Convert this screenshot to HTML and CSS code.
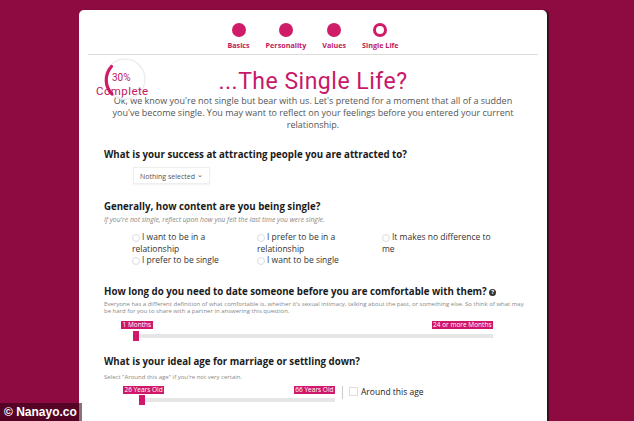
FILE: index.html
```html
<!DOCTYPE html>
<html>
<head>
<meta charset="utf-8">
<link rel="stylesheet" href="styles.css">
</head>
<body>
<div class="card">
  <nav class="steps">
    <div class="step"><span class="dot"></span><span class="step-label">Basics</span></div>
    <div class="step"><span class="dot"></span><span class="step-label">Personality</span></div>
    <div class="step"><span class="dot"></span><span class="step-label">Values</span></div>
    <div class="step"><span class="dot current"></span><span class="step-label">Single Life</span></div>
  </nav>
  <div class="divider"></div>
  <header class="header">
    <div class="progress">
      <svg class="ring" width="46" height="44" viewBox="0 0 46 44">
        <circle cx="25" cy="22" r="20" fill="none" stroke="#eeeeee" stroke-width="1.5"/>
        <path d="M 11.5 9.5 A 20 20 0 0 0 12 37" fill="none" stroke="#d01c68" stroke-width="3.2" stroke-linecap="round"/>
      </svg>
      <span class="pct">30%</span>
      <span class="complete">Complete</span>
    </div>
    <h1 class="title">...The Single Life?</h1>
    <p class="intro">Ok, we know you're not single but bear with us. Let's pretend for a moment that all of a sudden you've become single. You may want to reflect on your feelings before you entered your current relationship.</p>
  </header>

  <section class="question q1">
    <h2 class="q-title">What is your success at attracting people you are attracted to?</h2>
    <div class="select">Nothing selected <span class="caret">&#8964;</span></div>
  </section>

  <section class="question q2">
    <h2 class="q-title">Generally, how content are you being single?</h2>
    <p class="hint wide"><em>If you're not single, reflect upon how you felt the last time you were single.</em></p>
    <div class="options">
      <label class="option"><span class="radio"></span>I want to be in a relationship</label>
      <label class="option"><span class="radio"></span>I prefer to be in a relationship</label>
      <label class="option"><span class="radio"></span>It makes no difference to me</label>
      <label class="option"><span class="radio"></span>I prefer to be single</label>
      <label class="option"><span class="radio"></span>I want to be single</label>
    </div>
  </section>

  <section class="question q3">
    <h2 class="q-title">How long do you need to date someone before you are comfortable with them? <span class="help">?</span></h2>
    <p class="hint">Everyone has a different definition of what comfortable is, whether it's sexual intimacy, talking about the past, or something else. So think of what may be hard for you to share with a partner in answering this question.</p>
    <div class="slider long">
      <div class="slider-labels"><span class="tag">1 Months</span><span class="tag">24 or more Months</span></div>
      <div class="track"><span class="handle"></span></div>
    </div>
  </section>

  <section class="question q4">
    <h2 class="q-title">What is your ideal age for marriage or settling down?</h2>
    <p class="hint lower">Select "Around this age" if you're not very certain.</p>
    <div class="age-row">
      <div class="slider short">
        <div class="slider-labels"><span class="tag">26 Years Old</span><span class="tag">66 Years Old</span></div>
        <div class="track"><span class="handle"></span></div>
      </div>
      <span class="sep"></span>
      <label class="check"><span class="box"></span>Around this age</label>
    </div>
  </section>
</div>
<div class="watermark">© Nanayo.co</div>
</body>
</html>
```

FILE: styles.css
```css
html, body {
  margin: 0;
  padding: 0;
}
body {
  background: #8d0b41;
  width: 634px;
  height: 421px;
  overflow: hidden;
  position: relative;
  font-family: "Open Sans", "Liberation Sans", sans-serif;
}
.card {
  margin: 10px 0 0 79px;
  width: 468px;
  height: 420px;
  background: #ffffff;
  border-radius: 5px 5px 0 0;
  box-shadow: 2px 0 1px rgba(20, 20, 20, 0.75);
}
.steps {
  display: flex;
  justify-content: center;
  gap: 16px;
  padding: 13px 0 0 0;
}
.step {
  display: flex;
  flex-direction: column;
  align-items: center;
}
.dot {
  width: 14px;
  height: 14px;
  border-radius: 50%;
  background: #d01c68;
  box-sizing: border-box;
}
.dot.current {
  background: #fff;
  border: 3.5px solid #d01c68;
}
.step-label {
  margin-top: 3px;
  font-size: 7.2px;
  line-height: 10px;
  font-weight: 700;
  color: #c0185e;
}
.divider {
  margin: 4px 9px 0 9px;
  border-top: 1px solid #dcdcdc;
}
.header {
  position: relative;
  text-align: center;
}
.progress {
  position: absolute;
  left: 17px;
  top: 2px;
  width: 54px;
  height: 50px;
}
.ring {
  position: absolute;
  left: 4px;
  top: 0;
}
.pct {
  position: absolute;
  left: 16px;
  top: 15px;
  font-family: Roboto, sans-serif;
  font-size: 10px;
  color: #c0185e;
}
.complete {
  position: absolute;
  left: 0;
  top: 29px;
  font-family: Roboto, sans-serif;
  font-size: 11.5px;
  line-height: 11px;
  letter-spacing: 0.4px;
  color: #c0185e;
}
.title {
  margin: 0;
  padding-top: 13px;
  font-family: Roboto, sans-serif;
  font-weight: 400;
  font-size: 23px;
  line-height: 27px;
  letter-spacing: 0.5px;
  color: #c8186a;
}
.intro {
  margin: 0;
  padding: 0 24px;
  font-size: 9px;
  line-height: 12px;
  color: #555;
}
.question {
  padding: 0 16px 0 25px;
}
.q-title {
  margin: 0;
  font-size: 9.7px;
  line-height: 14px;
  font-weight: 700;
  color: #1b1b1b;
}
.q1 { margin-top: 17px; }
.q2 { margin-top: 16px; }
.q3 { margin-top: 19px; }
.q4 { margin-top: 17px; }
.help {
  display: inline-block;
  width: 7px;
  height: 7px;
  border-radius: 50%;
  background: #333;
  color: #fff;
  font-size: 6px;
  line-height: 7px;
  text-align: center;
  vertical-align: 1px;
}
.select {
  display: inline-block;
  margin: 3px 0 0 29px;
  padding: 0 6px;
  height: 17px;
  line-height: 17px;
  font-size: 7px;
  color: #555;
  border: 1px solid #eee;
  box-shadow: 0 1px 2px rgba(0,0,0,0.06);
  box-sizing: border-box;
}
.caret {
  font-size: 7px;
  position: relative;
  top: -2px;
}
.hint {
  margin: 2px 0 0 0;
  font-size: 6px;
  line-height: 7px;
  color: #888;
}
.hint.wide {
  font-size: 6.8px;
  line-height: 8px;
  margin-top: 2px;
}
.hint.lower {
  margin-top: 5px;
}
.options {
  display: grid;
  grid-template-columns: 125px 125px 125px;
  margin: 7px 0 0 28px;
}
.option {
  width: 116px;
  font-size: 8.5px;
  line-height: 11.5px;
  color: #333;
}
.radio {
  display: inline-block;
  width: 8px;
  height: 8px;
  border: 1px solid #ddd;
  border-radius: 50%;
  margin-right: 2px;
  vertical-align: -2px;
  box-sizing: border-box;
}
.slider {
  display: flex;
  flex-direction: column;
}
.slider.long {
  margin: 6px 0 0 17px;
  width: 372px;
}
.slider-labels {
  display: flex;
  justify-content: space-between;
}
.tag {
  background: #d0176a;
  color: #fff;
  font-size: 6.5px;
  line-height: 8px;
  padding: 0 1.5px;
}
.track {
  position: relative;
  height: 4px;
  background: #e6e6e6;
  margin: 5px 0 0 18px;
}
.handle {
  position: absolute;
  left: -6px;
  top: -3px;
  width: 6px;
  height: 10px;
  background: #d0176a;
}
.age-row {
  display: flex;
  align-items: flex-start;
  margin: 5px 0 0 19px;
}
.slider.short {
  width: 212px;
}
.slider.short .track {
  margin-left: 22px;
  margin-top: 4px;
}
.sep {
  width: 1px;
  height: 13px;
  background: #ccc;
  margin: 0 6px 0 7px;
}
.check {
  display: flex;
  align-items: center;
  font-size: 8.5px;
  line-height: 11px;
  color: #222;
}
.box {
  width: 9px;
  height: 9px;
  border: 1px solid #ddd;
  box-sizing: border-box;
  margin-right: 3px;
}
.watermark {
  position: absolute;
  left: 0;
  bottom: 0;
  width: 78px;
  height: 18px;
  padding-left: 4px;
  background: rgba(40, 0, 15, 0.55);
  color: #fff;
  font-family: "Liberation Sans", Arial, sans-serif;
  font-weight: 700;
  font-size: 12px;
  line-height: 18px;
}
```
